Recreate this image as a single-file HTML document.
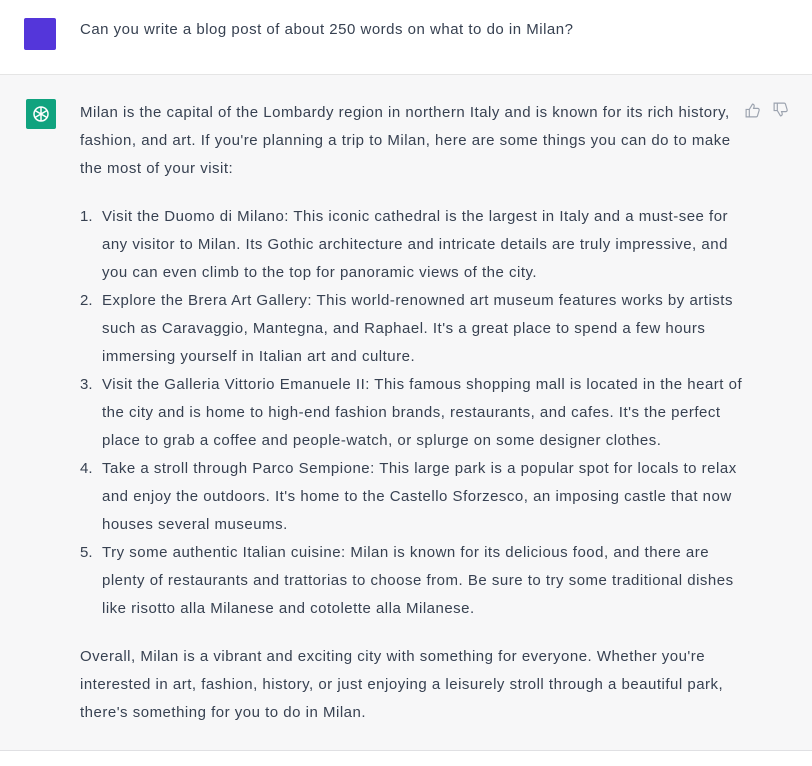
<!DOCTYPE html>
<html><head><style>
body{margin:0;width:812px;height:766px;background:#fff;font-family:"Liberation Sans",sans-serif;color:#374151;font-size:15px;letter-spacing:0.5px;overflow:hidden}
.u{position:absolute;left:0;top:0;width:812px;height:74px;background:#fff;border-bottom:1px solid #e5e5e5}
.a{position:absolute;left:0;top:75px;width:812px;height:675px;background:#f7f7f8;border-bottom:1px solid #e0e0e3}
.l{position:absolute;left:80px;white-space:nowrap;line-height:28px}
.n{position:absolute;left:80px;line-height:28px;letter-spacing:0}
</style></head><body>
<div class="u"></div>
<div style="position:absolute;left:24px;top:18px;width:32px;height:32px;background:#5436da;border-radius:2px"></div>
<div class="l" style="top:16px">Can you write a blog post of about 250 words on what to do in Milan?</div>
<div class="a"></div>
<div style="position:absolute;left:26px;top:99px;width:30px;height:30px;background:#10a37f;border-radius:2px"></div>
<svg style="position:absolute;left:29px;top:102px" width="24" height="24" viewBox="0 0 24 24" fill="none" stroke="#fff" stroke-width="1.5"><circle cx="12" cy="12" r="7"/><path d="M12 5v7M6 8.5l6 3.5M6 15.5l6-3.5M12 19v-7M18 15.5l-6-3.5M18 8.5l-6 3.5"/></svg>
<svg style="position:absolute;left:744px;top:102px" width="17" height="17" viewBox="0 0 16 16" fill="none" stroke="#9ca3af" stroke-width="1.1"><path d="M2 7h3v7H2zM5 7l3-5c1 0 2 1 1.5 2.5L9 6h4c1 0 1.5 1 1.2 2l-1.5 5c-.2.6-.7 1-1.3 1H5"/></svg>
<svg style="position:absolute;left:772px;top:101px" width="17" height="17" viewBox="0 0 16 16" fill="none" stroke="#9ca3af" stroke-width="1.1"><path d="M2 2h3v7H2zM5 9l3 5c1 0 2-1 1.5-2.5L9 10h4c1 0 1.5-1 1.2-2l-1.5-5C12.5 2.4 12 2 11.4 2H5"/></svg>
<div class="l" style="top:99px">Milan is the capital of the Lombardy region in northern Italy and is known for its rich history,<br>fashion, and art. If you're planning a trip to Milan, here are some things you can do to make<br>the most of your visit:</div>
<div class="n" style="top:203px">1.<br><br><br>2.<br><br><br>3.<br><br><br>4.<br><br><br>5.</div>
<div class="l" style="left:102px;top:203px">Visit the Duomo di Milano: This iconic cathedral is the largest in Italy and a must-see for<br>any visitor to Milan. Its Gothic architecture and intricate details are truly impressive, and<br>you can even climb to the top for panoramic views of the city.<br>Explore the Brera Art Gallery: This world-renowned art museum features works by artists<br>such as Caravaggio, Mantegna, and Raphael. It's a great place to spend a few hours<br>immersing yourself in Italian art and culture.<br>Visit the Galleria Vittorio Emanuele II: This famous shopping mall is located in the heart of<br>the city and is home to high-end fashion brands, restaurants, and cafes. It's the perfect<br>place to grab a coffee and people-watch, or splurge on some designer clothes.<br>Take a stroll through Parco Sempione: This large park is a popular spot for locals to relax<br>and enjoy the outdoors. It's home to the Castello Sforzesco, an imposing castle that now<br>houses several museums.<br>Try some authentic Italian cuisine: Milan is known for its delicious food, and there are<br>plenty of restaurants and trattorias to choose from. Be sure to try some traditional dishes<br>like risotto alla Milanese and cotolette alla Milanese.</div>
<div class="l" style="top:643px">Overall, Milan is a vibrant and exciting city with something for everyone. Whether you're<br>interested in art, fashion, history, or just enjoying a leisurely stroll through a beautiful park,<br>there's something for you to do in Milan.</div>
</body></html>
